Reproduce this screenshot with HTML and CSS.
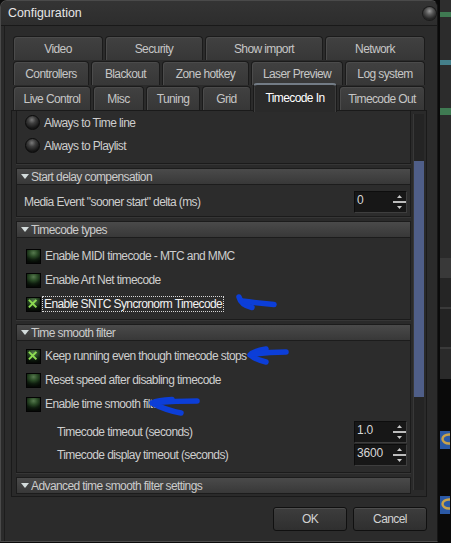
FILE: index.html
```html
<!DOCTYPE html>
<html>
<head>
<meta charset="utf-8">
<title>Configuration</title>
<link rel="stylesheet" href="styles.css">
</head>
<body>
<div class="screen">
  <div class="dialog">
    <div class="titlebar">
      <span class="title">Configuration</span>
      <span class="orb"></span>
    </div>
    <div class="body">
      <div class="tabs">
        <div class="tabrow r1">
          <div class="tab">Video</div>
          <div class="tab">Security</div>
          <div class="tab">Show import</div>
          <div class="tab">Network</div>
        </div>
        <div class="tabrow r2">
          <div class="tab">Controllers</div>
          <div class="tab">Blackout</div>
          <div class="tab">Zone hotkey</div>
          <div class="tab">Laser Preview</div>
          <div class="tab">Log system</div>
        </div>
        <div class="tabrow r3">
          <div class="tab">Live Control</div>
          <div class="tab">Misc</div>
          <div class="tab">Tuning</div>
          <div class="tab">Grid</div>
          <div class="tab sel">Timecode In</div>
          <div class="tab">Timecode Out</div>
        </div>
      </div>

      <div class="panel">
        <div class="scroll">
          <div class="group first">
            <div class="row"><span class="radio"></span><span class="label">Always to Time line</span></div>
            <div class="row"><span class="radio"></span><span class="label">Always to Playlist</span></div>
          </div>

          <div class="head">Start delay compensation</div>
          <div class="group g-delay">
            <div class="srow">
              <span class="label">Media Event "sooner start" delta (ms)</span>
              <span class="spin"><span class="val">0</span><svg class="arrows" viewBox="0 0 13 20" width="13" height="20"><polygon points="4,6 6.5,3 9,6" fill="#c8c8c8"/><rect x="0" y="9" width="13" height="2" fill="#bcbcbc"/><polygon points="4,14 9,14 6.5,17" fill="#c8c8c8"/></svg></span>
            </div>
          </div>

          <div class="head">Timecode types</div>
          <div class="group g-types">
            <div class="row"><span class="chk"></span><span class="label">Enable MIDI timecode - MTC and MMC</span></div>
            <div class="row"><span class="chk"></span><span class="label">Enable Art Net timecode</span></div>
            <div class="row"><span class="chk on"><svg viewBox="0 0 15 15" width="13" height="13"><path d="M3 3 L10 10 M10 3 L3 10" stroke="#8ddc52" stroke-width="2.3" stroke-linecap="square"/></svg></span><span class="label focus">Enable SNTC Syncronorm Timecode</span></div>
          </div>

          <div class="head">Time smooth filter</div>
          <div class="group g-smooth">
            <div class="row"><span class="chk on"><svg viewBox="0 0 15 15" width="13" height="13"><path d="M3 3 L10 10 M10 3 L3 10" stroke="#8ddc52" stroke-width="2.3" stroke-linecap="square"/></svg></span><span class="label">Keep running even though timecode stops</span></div>
            <div class="row"><span class="chk"></span><span class="label">Reset speed after disabling timecode</span></div>
            <div class="row"><span class="chk"></span><span class="label">Enable time smooth filter</span></div>
            <div class="srow indent first-spin">
              <span class="label">Timecode timeout (seconds)</span>
              <span class="spin"><span class="val">1.0</span><svg class="arrows" viewBox="0 0 13 20" width="13" height="20"><polygon points="4,6 6.5,3 9,6" fill="#c8c8c8"/><rect x="0" y="9" width="13" height="2" fill="#bcbcbc"/><polygon points="4,14 9,14 6.5,17" fill="#c8c8c8"/></svg></span>
            </div>
            <div class="srow indent">
              <span class="label">Timecode display timeout (seconds)</span>
              <span class="spin"><span class="val">3600</span><svg class="arrows" viewBox="0 0 13 20" width="13" height="20"><polygon points="4,6 6.5,3 9,6" fill="#c8c8c8"/><rect x="0" y="9" width="13" height="2" fill="#bcbcbc"/><polygon points="4,14 9,14 6.5,17" fill="#c8c8c8"/></svg></span>
            </div>
          </div>

          <div class="head">Advanced time smooth filter settings</div>
        </div>
        <div class="vscroll"><div class="thumb"></div></div>
      </div>

      <div class="buttons">
        <button class="btn">OK</button>
        <button class="btn">Cancel</button>
      </div>
    </div>
  </div>

  <div class="backdrop">
    <div class="b b1"></div>
    <div class="b green"></div>
    <div class="b b2"></div>
    <div class="b teal"></div>
    <div class="b b2"></div>
    <div class="b green tall"></div>
    <div class="b b3"></div>
    <div class="b b4"></div>
    <div class="b b5"></div>
    <div class="b line"></div>
    <div class="b b6"></div>
    <div class="b line"></div>
    <div class="b b7"></div>
    <div class="b black1"></div>
    <div class="b icon"><svg viewBox="0 0 10 18" width="10" height="18"><rect width="10" height="18" fill="#2b59a6"/><ellipse cx="9" cy="8" rx="6.5" ry="4.5" fill="none" stroke="#c9a24a" stroke-width="2.5"/></svg></div>
    <div class="b black2"></div>
    <div class="b icon"><svg viewBox="0 0 10 18" width="10" height="18"><rect width="10" height="18" fill="#2b59a6"/><ellipse cx="9" cy="8" rx="6.5" ry="4.5" fill="none" stroke="#c9a24a" stroke-width="2.5"/></svg></div>
    <div class="b black3"></div>
  </div>

  <svg class="annot" viewBox="0 0 451 543" width="451" height="543">
    <g fill="none" stroke="#0c3ed8" stroke-width="5.5" stroke-linecap="round" stroke-linejoin="round">
      <path d="M239 297 Q241 305 252 307.5"/>
      <path d="M242 301 Q258 303 274 304.5"/>
      <path d="M266 349 Q254 351 250 355 Q256 360 266 362"/>
      <path d="M253 354 Q270 352 286 352"/>
      <path d="M172 399.5 Q158 400 152 403 Q165 410 181 413"/>
      <path d="M155 402.5 Q176 401 197 401"/>
    </g>
  </svg>
</div>
</body>
</html>
```

FILE: styles.css
```css
html, body {
  margin: 0;
  padding: 0;
}

body {
  background: #0b0b0b;
  font-family: "Liberation Sans", Arial, sans-serif;
  font-size: 12px;
  letter-spacing: -0.6px;
  color: #cdcdcd;
}

.screen {
  position: relative;
  display: flex;
  width: 451px;
  height: 543px;
  overflow: hidden;
  background: #0b0b0b;
}

/* ---------- dialog ---------- */
.dialog {
  flex: none;
  width: 438px;
  height: 542px;
  box-sizing: border-box;
  border: 1px solid #4a4a4a;
  border-right-color: #161616;
  border-bottom-color: #4c4c4c;
  border-radius: 7px 7px 0 0;
  background: #2b2b2b;
  display: flex;
  flex-direction: column;
}

.titlebar {
  flex: none;
  height: 24px;
  border-bottom: 1px solid #191919;
  border-radius: 6px 6px 0 0;
  background: linear-gradient(#343434, #2d2d2d);
  display: flex;
  align-items: center;
  justify-content: space-between;
  padding: 0 1px 0 7px;
}

.title {
  font-size: 12.4px;
  letter-spacing: 0;
  color: #e6e6e6;
}

.orb {
  width: 13px;
  height: 13px;
  border-radius: 50%;
  background: radial-gradient(circle at 50% 32%, #9a9a9a 0%, #555 35%, #262626 70%, #151515 100%);
  box-shadow: 0 0 0 1px #1c1c1c;
}

.body {
  flex: 1;
  display: flex;
  flex-direction: column;
  padding: 10px 10px 0 10px;
  box-shadow: inset 3px 0 0 #2b2b2b, inset 4px 0 0 #1d1d1d;
}

/* ---------- tabs ---------- */
.tabs {
  margin: 0 2px;
  display: flex;
  flex-direction: column;
  gap: 1px;
}

.tabrow {
  display: flex;
  gap: 2px;
  height: 24px;
  align-items: flex-start;
}

.tab {
  flex: none;
  height: 24px;
  box-sizing: border-box;
  border: 1px solid #1b1b1b;
  border-bottom: none;
  border-radius: 4px 4px 0 0;
  background: linear-gradient(#414141, #373737);
  box-shadow: inset 1px 1px 0 #4b4b4b;
  color: #c6c6c6;
  display: flex;
  align-items: center;
  justify-content: center;
  white-space: nowrap;
}

.r1 .tab:nth-child(1) { width: 90px; }
.r1 .tab:nth-child(2) { width: 98px; }
.r1 .tab:nth-child(3) { width: 118px; }
.r1 .tab:nth-child(4) { width: 100px; }

.r2 .tab:nth-child(1) { width: 76px; }
.r2 .tab:nth-child(2) { width: 69px; }
.r2 .tab:nth-child(3) { width: 87px; }
.r2 .tab:nth-child(4) { width: 92px; }
.r2 .tab:nth-child(5) { width: 80px; }

.r3 .tab:nth-child(1) { width: 78px; }
.r3 .tab:nth-child(2) { width: 51px; }
.r3 .tab:nth-child(3) { width: 54px; }
.r3 .tab:nth-child(4) { width: 49px; }
.r3 .tab:nth-child(5) { width: 84px; }
.r3 .tab:nth-child(6) { width: 86px; }

.tab.sel {
  position: relative;
  z-index: 1;
  height: 29px;
  margin-top: -3px;
  padding-bottom: 2px;
  background: #2a2a2a;
  color: #ffffff;
  border-color: #1a1a1a;
  border-top: 2px solid #737c86;
  box-shadow: inset 1px 0 0 #3c3c3c, inset -1px 0 0 #3c3c3c;
}

/* ---------- panel ---------- */
.panel {
  flex: none;
  height: 387px;
  box-sizing: border-box;
  border: 1px solid #1a1a1a;
  background: #2a2a2a;
  display: flex;
}

.scroll {
  flex: 1;
  min-width: 0;
  overflow: hidden;
  padding: 0 2px 0 4px;
  display: flex;
  flex-direction: column;
}

.vscroll {
  flex: none;
  width: 11px;
  margin: 3px 2px 6px 0;
  box-sizing: border-box;
  border-left: 1px solid #383838;
  background: #242424;
  padding-top: 47px;
}

.thumb {
  height: 236px;
  background: #4f5e88;
}

.group {
  flex: none;
  border: 1px solid #1b1b1b;
  border-top: none;
  background: #2c2c2c;
  box-shadow: 0 1px 0 #363636;
  padding: 0 3px 0 7px;
}

.group.first { padding-bottom: 6px; }
.group.first .row { height: 23px; margin-left: 1px; }

.head {
  flex: none;
  height: 17px;
  box-sizing: border-box;
  margin-top: 4px;
  border: 1px solid #1c1c1c;
  background: linear-gradient(#4a4a4a, #383838);
  color: #cccccc;
  display: flex;
  align-items: center;
  padding-left: 4px;
  white-space: nowrap;
}

.head::before {
  content: "";
  width: 0;
  height: 0;
  border-left: 4.5px solid transparent;
  border-right: 4.5px solid transparent;
  border-top: 5px solid #d4dcdc;
  margin-right: 2px;
}

.g-delay { padding-top: 6px; padding-bottom: 3px; }
.g-types { padding-top: 6px; padding-bottom: 3px; }
.g-smooth { padding-top: 3px; padding-bottom: 6px; }

.row {
  display: flex;
  align-items: center;
  height: 24px;
  gap: 4px;
  white-space: nowrap;
}

.g-types .row, .g-smooth .row { margin-left: 2px; }

.srow {
  display: flex;
  align-items: center;
  justify-content: space-between;
  height: 22px;
  white-space: nowrap;
}

.srow.indent { height: 23px; padding-left: 33px; }
.srow.first-spin { margin-top: 4px; }

.label { color: #cecece; }

.label.focus {
  color: #f2f2f2;
  outline: 1px dotted #d8d8d8;
  outline-offset: 0;
  padding: 0 1px;
  margin-left: -2px;
}

.radio {
  flex: none;
  width: 15px;
  height: 15px;
  box-sizing: border-box;
  border-radius: 50%;
  border: 1px solid #0c0c0c;
  background: radial-gradient(circle at 45% 30%, #7a7a7a 0%, #3e3e3e 32%, #181818 68%, #090909 100%);
}

.chk {
  flex: none;
  width: 15px;
  height: 15px;
  box-sizing: border-box;
  border: 1px solid #030303;
  background: radial-gradient(ellipse 85% 75% at 50% 22%, #577a4f 0%, #2a4a26 38%, #0e1c0e 72%, #060a06 100%);
  display: flex;
  align-items: center;
  justify-content: center;
}

.spin {
  flex: none;
  width: 53px;
  height: 22px;
  box-sizing: border-box;
  border: 1px solid #0d0d0d;
  border-right-color: #3e3e3e;
  border-bottom-color: #3e3e3e;
  background: #171717;
  display: flex;
  justify-content: space-between;
  align-items: flex-start;
}

.val {
  color: #d6d6d6;
  line-height: 14px;
  padding: 1px 0 0 2px;
  letter-spacing: -0.2px;
}

.arrows {
  flex: none;
}

/* ---------- buttons ---------- */
.buttons {
  display: flex;
  justify-content: flex-end;
  gap: 6px;
  margin-top: 10px;
}

.btn {
  width: 74px;
  height: 24px;
  box-sizing: border-box;
  border: 1px solid #101010;
  border-radius: 3px;
  background: linear-gradient(#3d3d3d, #2f2f2f);
  box-shadow: inset 0 1px 0 #4e4e4e;
  color: #d2d2d2;
  font-family: inherit;
  font-size: 12px;
  letter-spacing: -0.6px;
  padding: 0;
}

/* ---------- backdrop strip ---------- */
.backdrop {
  flex: none;
  width: 13px;
  height: 543px;
  box-sizing: border-box;
  border-left: 2px solid #0a0a0a;
  display: flex;
  flex-direction: column;
}

.b { flex: none; }
.b1 { height: 12px; background: #2e2e2e; }
.b2 { height: 43px; background: #2c2c2c; }
.green { height: 5px; background: #3f7a52; }
.green.tall { height: 7px; }
.teal { height: 5px; background: #447f8a; }
.b3 { height: 143px; background: #2b2b2b; }
.b4 { height: 20px; background: #393939; }
.b5 { height: 29px; background: #252525; }
.line { height: 2px; background: #3a3a3a; }
.b6 { height: 38px; background: #232323; }
.b7 { height: 30px; background: #2a2a2a; }
.black1 { height: 52px; background: #0a0a0a; }
.icon { height: 18px; }
.icon svg { display: block; }
.black2 { height: 47px; background: #0a0a0a; }
.black3 { flex: 1; background: #0a0a0a; }

/* ---------- annotation overlay ---------- */
.annot {
  position: absolute;
  left: 0;
  top: 0;
  pointer-events: none;
}
```
